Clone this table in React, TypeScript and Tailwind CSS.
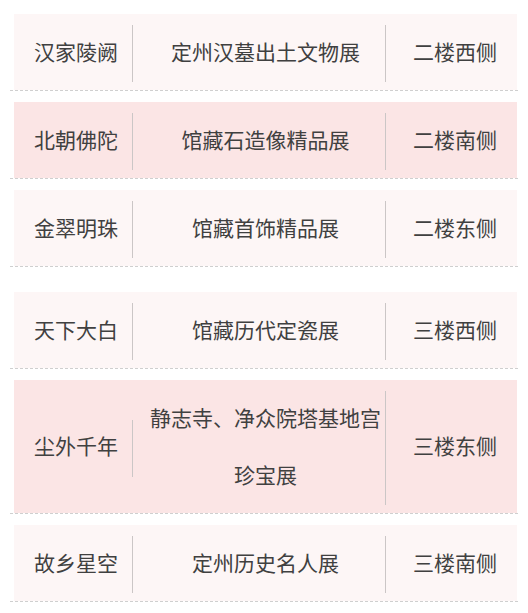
const rows = [
  { name: '汉家陵阙', title: ['定州汉墓出土文物展'], place: '二楼西侧', dark: false },
  { name: '北朝佛陀', title: ['馆藏石造像精品展'], place: '二楼南侧', dark: true },
  { name: '金翠明珠', title: ['馆藏首饰精品展'], place: '二楼东侧', dark: false },
  { name: '天下大白', title: ['馆藏历代定瓷展'], place: '三楼西侧', dark: false, gap: true },
  { name: '尘外千年', title: ['静志寺、净众院塔基地宫', '珍宝展'], place: '三楼东侧', dark: true },
  { name: '故乡星空', title: ['定州历史名人展'], place: '三楼南侧', dark: false },
]

export default function App() {
  return (
    <div
      className="w-[528px] h-[613px] bg-white pt-[3px] text-[#404040] text-[21px]"
      style={{ fontFamily: '"Noto Sans CJK SC", "Noto Sans", sans-serif' }}
    >
      {rows.map((r) => (
        <div
          key={r.name}
          className={`mx-[10px] border-b border-dashed border-[#cfcfcf] ${r.gap ? 'mt-[25px]' : 'mt-[11px]'}`}
        >
          <div
            className={`ml-[4px] mr-px flex items-center pt-[11px] pb-[8px] ${r.dark ? 'bg-[#fbe5e5]' : 'bg-[#fdf6f6]'}`}
          >
            <div className="w-[119px] shrink-0 h-[57px] border-r border-[#cbc6c6] flex items-center justify-center pl-[6px] pb-[4px]">
              {r.name}
            </div>
            <div className="flex-1 pl-[13px] text-center">
              {r.title.map((t) => (
                <div key={t} className="h-[57px] leading-[52px]">{t}</div>
              ))}
            </div>
            <div className="w-[132px] shrink-0 self-stretch border-l border-[#cbc6c6] flex items-center justify-center pl-[7px] pb-[4px]">
              {r.place}
            </div>
          </div>
        </div>
      ))}
    </div>
  )
}
